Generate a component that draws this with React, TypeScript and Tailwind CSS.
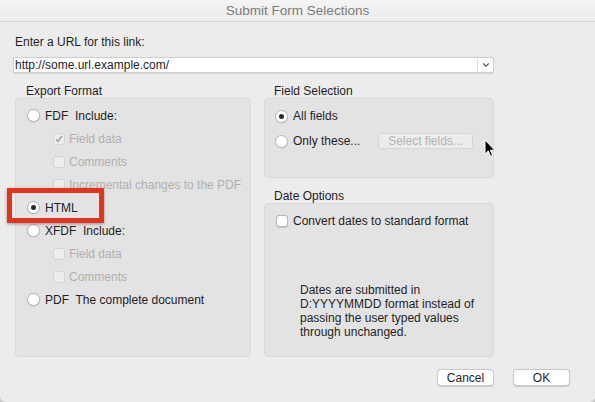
import { ChevronDown } from 'lucide-react'

function Radio({ checked }: { checked?: boolean }) {
  return (
    <div className="w-[13px] h-[13px] shrink-0 rounded-full bg-white border border-[#b8b8b8] shadow-[0_0.5px_1px_rgba(0,0,0,0.15)] flex items-center justify-center">
      {checked && <div className="w-[5px] h-[5px] rounded-full bg-[#2a2a2a]" />}
    </div>
  )
}

function Check({ checked, disabled }: { checked?: boolean; disabled?: boolean }) {
  return (
    <div
      className={
        disabled
          ? 'w-[12px] h-[12px] shrink-0 rounded-[3px] bg-[#ededed] border border-[#d4d4d4] flex items-center justify-center'
          : 'w-[12px] h-[12px] shrink-0 rounded-[3px] bg-white border border-[#b8b8b8] shadow-[0_0.5px_1px_rgba(0,0,0,0.15)] flex items-center justify-center'
      }
    >
      {checked && (
        <svg width="8" height="8" viewBox="0 0 8 8">
          <path d="M1 4.2 L3 6.4 L7 1" fill="none" stroke="#9a9a9a" strokeWidth="1.3" />
        </svg>
      )}
    </div>
  )
}

function RadioRow({ label, checked }: { label: string; checked?: boolean }) {
  return (
    <div className="flex items-center h-[23px] pl-[11px]">
      <Radio checked={checked} />
      <span className="ml-[5px] whitespace-pre text-[#1f1f1f]">{label}</span>
    </div>
  )
}

function CheckRow({ label, checked }: { label: string; checked?: boolean }) {
  return (
    <div className="flex items-center h-[23px] pl-[37px]">
      <Check checked={checked} disabled />
      <span className="ml-[4px] text-[#b0b0b0]">{label}</span>
    </div>
  )
}

export default function App() {
  return (
    <div
      className="relative w-[595px] h-[402px] overflow-hidden bg-[#bdbdbd] text-[12px] leading-[14px]"
      style={{ fontFamily: '"Liberation Sans", Arial, sans-serif' }}
    >
      <div className="flex flex-col w-full h-full bg-[#ececec] rounded-b-[5px]">
        {/* Title bar */}
        <div className="h-[22px] shrink-0 flex items-center justify-center bg-gradient-to-b from-[#f5f5f5] to-[#ebebeb] border-b border-[#d6d6d6]">
          <span className="text-[13.5px] text-[#7c7c7c]">Submit Form Selections</span>
        </div>

        {/* Body */}
        <div className="flex flex-col pt-[13px] pl-[13px]">
          <div className="pl-[2px] text-[#1f1f1f]">Enter a URL for this link:</div>

          <div className="mt-[8px] w-[481px] h-[16px] flex bg-white border border-[#cfcfcf] rounded-[2px] shadow-[0_0.5px_1px_rgba(0,0,0,0.1)]">
            <div className="flex-1 flex items-center pl-[1px] text-[#1f1f1f]">http://some.url.example.com/</div>
            <div className="w-[16px] border-l border-[#dcdcdc] flex items-center justify-center">
              <ChevronDown size={10} strokeWidth={2.6} color="#555" />
            </div>
          </div>

          <div className="flex mt-[11px]">
            {/* Export Format */}
            <div className="ml-[2px] w-[236px] flex flex-col">
              <div className="pl-[11px] h-[14px] text-[#1f1f1f]">Export Format</div>
              <div className="h-[259px] bg-[#e3e3e3] border border-[#d9d9d9] rounded-[4px] pt-[5px] flex flex-col">
                <RadioRow label="FDF  Include:" />
                <CheckRow label="Field data" checked />
                <CheckRow label="Comments" />
                <CheckRow label="Incremental changes to the PDF" />
                <RadioRow label="HTML" checked />
                <RadioRow label="XFDF  Include:" />
                <CheckRow label="Field data" />
                <CheckRow label="Comments" />
                <RadioRow label="PDF  The complete document" />
              </div>
            </div>

            {/* Right column */}
            <div className="ml-[13px] w-[230px] flex flex-col">
              <div className="pl-[10px] h-[14px] text-[#1f1f1f]">Field Selection</div>
              <div className="h-[80px] bg-[#e3e3e3] border border-[#d9d9d9] rounded-[4px] pt-[6px] pl-[10px] flex flex-col">
                <div className="flex items-center h-[22px]">
                  <Radio checked />
                  <span className="ml-[5px] text-[#1f1f1f]">All fields</span>
                </div>
                <div className="flex items-center h-[22px] mt-[3px]">
                  <Radio />
                  <span className="ml-[5px] w-[85px] text-[#1f1f1f]">Only these...</span>
                  <div className="w-[95px] h-[16px] flex items-center justify-center bg-[#ececec] border border-[#d6d6d6] rounded-[3px] text-[#b3b3b3]">
                    Select fields...
                  </div>
                </div>
              </div>

              <div className="mt-[11px] pl-[10px] h-[14px] text-[#1f1f1f]">Date Options</div>
              <div className="h-[154px] bg-[#e3e3e3] border border-[#d9d9d9] rounded-[4px] pt-[6px] pl-[11px] flex flex-col">
                <div className="flex items-center h-[22px]">
                  <Check />
                  <span className="ml-[5px] text-[#1f1f1f]">Convert dates to standard format</span>
                </div>
                <p className="mt-[51px] pl-[24px] text-[#1f1f1f] leading-[14px]">
                  Dates are submitted in
                  <br />
                  D:YYYYMMDD format instead of
                  <br />
                  passing the user typed values
                  <br />
                  through unchanged.
                </p>
              </div>
            </div>
          </div>

          {/* Buttons */}
          <div className="flex mt-[12px] pl-[424px] gap-[19px]">
            <button className="w-[57px] h-[17px] flex items-center justify-center bg-white border border-[#c8c8c8] rounded-[4px] shadow-[0_0.5px_1px_rgba(0,0,0,0.15)] text-[#1f1f1f]">
              Cancel
            </button>
            <button className="w-[57px] h-[17px] flex items-center justify-center bg-white border border-[#c8c8c8] rounded-[4px] shadow-[0_0.5px_1px_rgba(0,0,0,0.15)] text-[#1f1f1f]">
              OK
            </button>
          </div>
        </div>
      </div>

      {/* Annotation box */}
      <div className="absolute left-[7px] top-[188px] w-[97px] h-[35px] border-[5px] border-[#e3341d] shadow-[0_1px_3px_rgba(0,0,0,0.35)]" />

      {/* Mouse cursor */}
      <svg className="absolute left-[484px] top-[139px]" width="12" height="19" viewBox="0 0 12 19">
        <path
          d="M1 1 L1 15 L4.3 11.9 L6.6 17.3 L8.6 16.4 L6.4 11.2 L10.8 11.2 Z"
          fill="#000"
          stroke="#fff"
          strokeWidth="1"
          strokeLinejoin="round"
        />
      </svg>
    </div>
  )
}
